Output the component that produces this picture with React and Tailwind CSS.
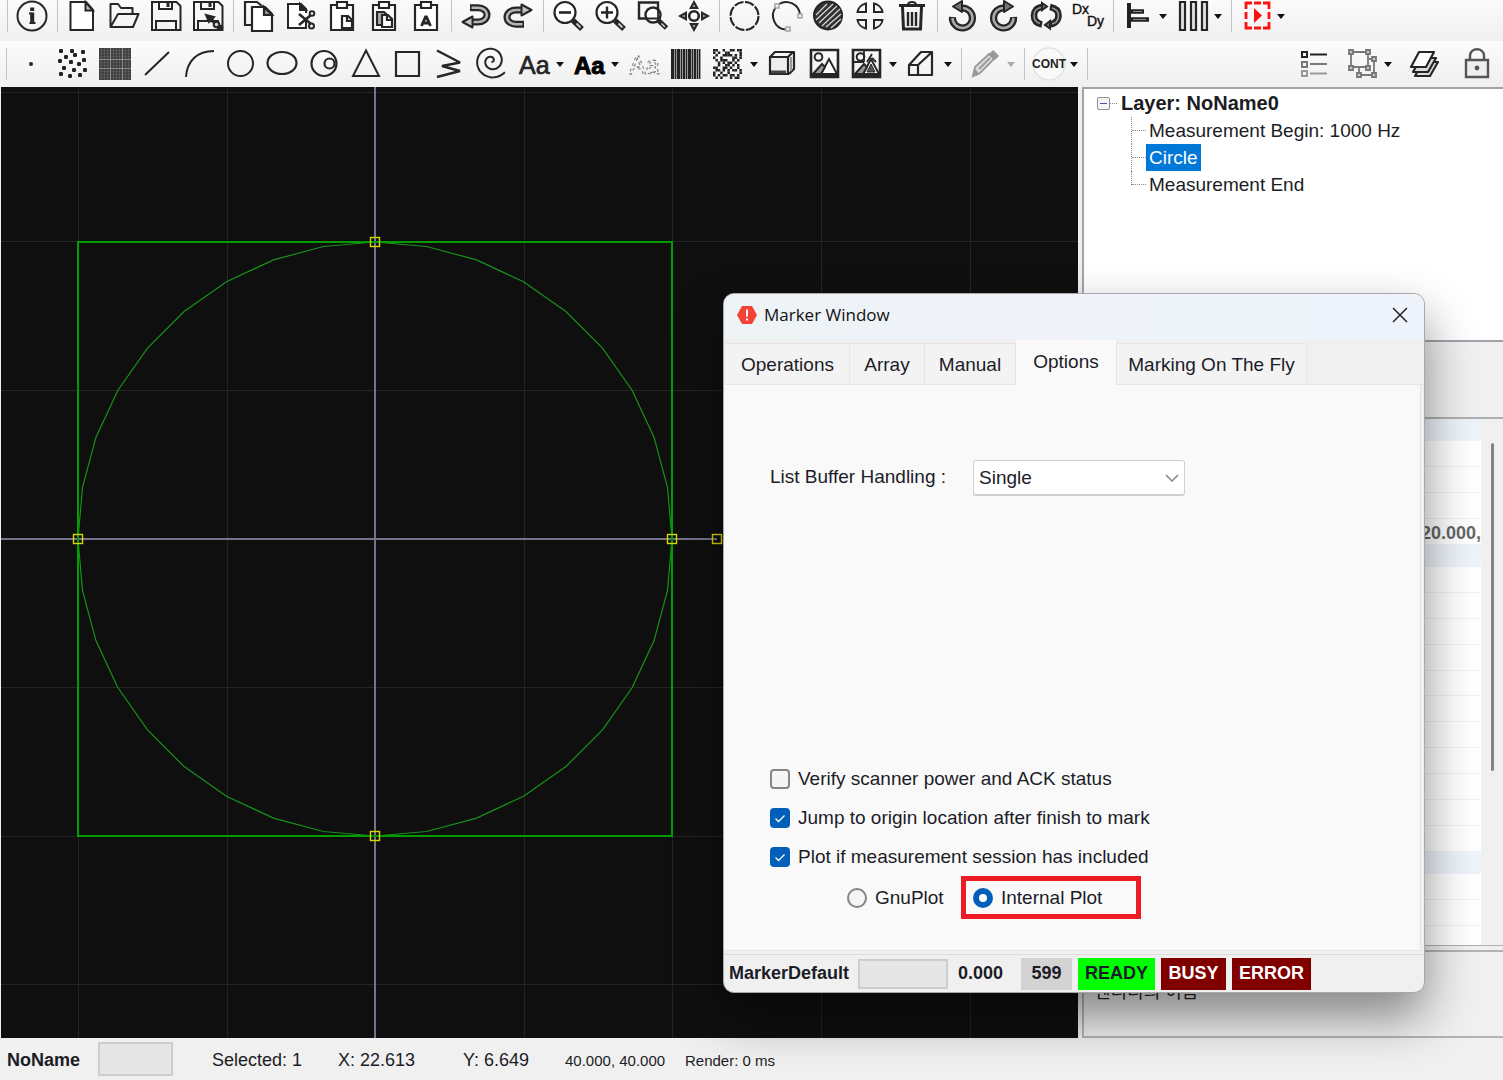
import React, { useState } from "react";

const INK = "#262626";

/* ---------- icon helpers: every icon is drawn on a 32 x 32 board ---------- */
function Svg({ children, w = 2, color = INK }) {
  return (
    <svg
      viewBox="0 0 32 32"
      className="h-8 w-8 shrink-0 overflow-visible"
      fill="none"
      stroke={color}
      strokeWidth={w}
      aria-hidden="true"
    >
      {children}
    </svg>
  );
}

const Info = () => (
  <Svg>
    <circle cx="16" cy="16" r="14.5" />
    <path d="M13 13.500h3.500M13.500 23h6" strokeWidth="1.800" />
    <path d="M16.200 12.600v11" strokeWidth="4" />
    <rect x="14.2" y="7.5" width="4" height="3.5" fill={INK} stroke="none" />
  </Svg>
);
const NewFile = () => (
  <Svg>
    <path d="M4.500 2H20l7 8v20H4.500z" fill="#fff" />
    <path d="M19.500 2v8.500H27z" fill="#bbb" />
  </Svg>
);
const Open = () => (
  <Svg>
    <path d="M2.500 27V4H10l3 4h11.500v5.500M2.500 27L10 14h20.500L25 27z" strokeLinejoin="round" />
  </Svg>
);
const SaveBody = () => (
  <>
    <path d="M2 2h24.500L30.500 6v24H2z" />
    <path d="M9 2v7h13V2M6 30v-9h20v9" />
    <path d="M18 3v4" strokeWidth="3" />
  </>
);
const Save = () => (
  <Svg>
    <SaveBody />
  </Svg>
);
const SaveAs = () => (
  <Svg>
    <SaveBody />
    <path d="M14 15l8 2-5 5z" fill={INK} />
    <path d="M18 19l7 5" strokeWidth="3.500" />
    <circle cx="24.500" cy="24.500" r="2.800" fill="#ccc" />
    <circle cx="28.500" cy="27.500" r="1.800" fill={INK} />
  </Svg>
);
const Copy = () => (
  <Svg w={2.2}>
    <path d="M10 25H3V2h12l5 4" />
    <path d="M10 7h13l7 7v17H10z" fill="#fff" />
    <path d="M22 7v8h8z" fill="#999" />
  </Svg>
);
const Cut = () => (
  <Svg>
    <path d="M20 28H4V4h13l5 5v4" fill="#fff" />
    <path d="M22 20v8h-4" />
    <path d="M16 4v6h6z" fill={INK} />
    <path d="M15 14l12 10M15 25l12-10" strokeWidth="2.600" />
    <circle cx="28" cy="13.500" r="2.300" />
    <circle cx="27.500" cy="26" r="2.500" />
  </Svg>
);
const Clipboard = ({ children }) => (
  <Svg w={2.2}>
    <path d="M5 5h22v25H5z" fill="#fff" />
    <path d="M11 2h10v6H11z" fill="#fff" />
    {children}
  </Svg>
);
const Paste = () => (
  <Clipboard>
    <path d="M16 16h6l4 4v8H16z" fill="#fff" />
    <path d="M21 16v5h5" />
  </Clipboard>
);
const PasteMulti = () => (
  <Clipboard>
    <path d="M9 12h7l3 3v10H9z" fill="#aaa" />
    <path d="M14 15h6l4 4v8H14z" fill="#fff" />
    <path d="M19 15v5h5" />
  </Clipboard>
);
const PasteText = () => (
  <Clipboard>
    <path d="M11.500 26l4-9h1l4 9M13 23h7" strokeWidth="2.800" />
  </Clipboard>
);
const UndoShape = () => (
  <>
    <path d="M10 7.800h8c5 0 9 3 9 7s-4 7.200-9 7.200h-8" strokeWidth="7" />
    <path d="M11.500 7.800H18c5 0 9 3 9 7s-4 7.200-9 7.200H9" strokeWidth="2.600" stroke="#b4b4b4" />
    <path d="M2.500 22l10-5.500v11z" fill="#c4c4c4" strokeLinejoin="round" />
  </>
);
const Undo = () => (
  <Svg>
    <UndoShape />
  </Svg>
);
const Redo = () => (
  <Svg>
    <g transform="rotate(180 16 16)">
      <UndoShape />
    </g>
  </Svg>
);
const ZoomBody = () => (
  <>
    <circle cx="13" cy="12.500" r="10.500" fill="#fff" />
    <path d="M21 20.500l9 8.500" strokeWidth="5.500" />
    <path d="M24.500 23.500l4 4" strokeWidth="1.800" stroke="#ccc" />
  </>
);
const ZoomOut = () => (
  <Svg w={2.2}>
    <ZoomBody />
    <path d="M7 12.500h12" strokeWidth="2.600" />
  </Svg>
);
const ZoomIn = () => (
  <Svg w={2.2}>
    <ZoomBody />
    <path d="M7 12.500h12M13 6.500v12" strokeWidth="2.400" />
  </Svg>
);
const ZoomFit = () => (
  <Svg w={2.4}>
    <path d="M3 2.500h19v16H3z" />
    <circle cx="17" cy="15" r="7.500" fill="#fff" />
    <path d="M22 10v8.500H10" strokeWidth="1.800" />
    <path d="M22.500 20.500l8 7.500" strokeWidth="5" />
    <path d="M25.500 23.500l3.500 3.500" strokeWidth="1.500" stroke="#ccc" />
  </Svg>
);
const Pan = () => (
  <Svg>
    <circle cx="16" cy="16" r="4.800" strokeWidth="2.600" />
    <g fill={INK} stroke="none">
      <path d="M16 0l5 9H11zM16 32l5-9H11zM0 16l9-5v10zM32 16l-9-5v10z" />
    </g>
    <g fill="#999" stroke="none">
      <path d="M16 4l1.500 3h-3zM16 28l1.500-3h-3zM4 16l3-1.500v3zM28 16l-3-1.500v3z" />
    </g>
  </Svg>
);
const DashCircle = () => (
  <Svg>
    <circle cx="16.500" cy="16" r="14" strokeDasharray="9.500 1.500" />
  </Svg>
);
const DashArc = () => (
  <Svg>
    <path d="M15 29.500A14 14 0 0 1 6 7" />
    <path d="M9 4A14 14 0 0 1 30 14" />
    <g stroke="#a5a5a5" strokeWidth="1.500" fill="#f2f2f2">
      <path d="M5 4h4v4H5zM28 14h4v4h-4zM16 27h4v4h-4z" />
    </g>
  </Svg>
);
const Hatch = () => (
  <Svg>
    <circle cx="16" cy="15.500" r="14" fill="#333" />
    <path
      d="M4 15L15 4M4 20L21 4M7 23L25 6M10 26L28 9M14 27L29 14M19 28L29 19"
      stroke="#ddd"
      strokeWidth="1.100"
    />
  </Svg>
);
const Quarters = () => (
  <Svg>
    <path
      d="M12 3.500V12H3.500C4 8 7.500 4.500 12 3.500zM20 3.500V12h8.500C28 8 24.500 4.500 20 3.500zM12 28.500V20H3.500c.5 4 4 7.500 8.500 8.500zM20 28.500V20h8.500c-.5 4-4 7.500-8.500 8.500z"
    />
  </Svg>
);
const Trash = () => (
  <Svg>
    <path d="M3 5.500h26" strokeWidth="3" />
    <path d="M12 5c0-4 8-4 8 0" />
    <path d="M6.500 7l1 22h17l1-22" strokeWidth="3" />
    <path d="M12 12v14M16 12v14M20 12v14" strokeWidth="2.400" />
  </Svg>
);
const TurnShape = () => (
  <>
    <path d="M6.500 17A10 10 0 1 0 16 8" strokeWidth="7.200" />
    <path d="M6.500 18A10 10 0 1 0 16 8" strokeWidth="2.600" stroke="#aaa" />
    <path d="M7 6.500l9-5.500v11z" fill="#777" strokeLinejoin="round" />
  </>
);
const RotL = () => (
  <Svg>
    <TurnShape />
  </Svg>
);
const RotR = () => (
  <Svg>
    <g transform="matrix(-1 0 0 1 32 0)">
      <TurnShape />
    </g>
  </Svg>
);
const Cycle = () => (
  <Svg>
    <path d="M12 7C7 7.500 4 11 4 15.500s2.500 8 8 9M20 24.500c5-.5 8.500-4.500 8.500-9S26 8 20 7" strokeWidth="6.600" />
    <path d="M11 7.500C7 8 4 11 4 15.500s2.500 7 6 8M22 24c4-1 6.500-4.500 6.500-8.500S26 9 22 8" strokeWidth="1.600" stroke="#999" />
    <path d="M12 3l5 3.500-5 3.500zM20 21l-5 4 5 3.500z" fill="#777" />
  </Svg>
);
const DxDy = () => (
  <Svg>
    <g fill="#111" stroke="#111" strokeWidth="0.400" fontFamily="Liberation Sans, sans-serif" fontSize="14">
      <text x="0" y="14">Dx</text>
      <text x="15" y="26">Dy</text>
    </g>
  </Svg>
);
const AlignLeft = () => (
  <Svg>
    <path d="M7 3v25" strokeWidth="4" stroke="#222" />
    <path d="M9 11.500h13M9 19.500h18" strokeWidth="4.500" stroke="#222" />
    <path d="M11 11.500h9M11 19.500h13" strokeWidth="1.200" stroke="#888" />
  </Svg>
);
const Columns = () => (
  <Svg w={2.200}>
    <path d="M3 2h5v28H3zM14 2h5v28h-5zM25 2h5v28h-5z" fill="#e4e4e4" />
  </Svg>
);
const Play = () => (
  <Svg color="#ff1010">
    <path d="M6 9V3h6M23 3h6v6M29 22v6h-6M12 28H6v-6M6 12v7M29 12v7M14 3h7M14 28h7" strokeWidth="2.800" />
    <path d="M14 8l8 7.500L14 23z" fill="#ff1010" stroke="none" />
  </Svg>
);

const Dot = () => (
  <Svg>
    <circle cx="16" cy="16" r="2" fill={INK} stroke="none" />
  </Svg>
);
const DOTS = [
  [4, 3], [15, 3], [26, 4], [18, 7], [9, 9], [27, 12], [3, 13], [14, 14], [22, 16],
  [7, 20], [17, 22], [28, 22], [4, 26], [13, 28], [23, 27],
];
const Dots = () => (
  <Svg>
    <g fill="#222" stroke="none">
      {DOTS.map(([x, y]) => (
        <rect key={`${x}-${y}`} x={x - 2} y={y - 2} width="4" height="4" rx="1.200" />
      ))}
    </g>
  </Svg>
);
const Mesh = () => (
  <Svg w={1}>
    <rect x="0" y="0" width="32" height="32" fill="#6a6a6a" stroke="none" />
    {[1, 4, 7, 10, 13, 16, 19, 22, 25, 28, 31].map((p) => (
      <path key={p} d={`M${p} 0v32M0 ${p}h32`} stroke="#383838" strokeWidth="1.200" />
    ))}
    <path d="M0 11.500h32M0 20.500h32M11.500 0v32M23.500 0v32" stroke="#8c8c8c" strokeWidth="1" />
  </Svg>
);
const Line = () => (
  <Svg>
    <path d="M4 27L28 4" />
  </Svg>
);
const Arc = () => (
  <Svg>
    <path d="M3 29C4 13 14 3 31 3" />
  </Svg>
);
const Circle = () => (
  <Svg>
    <circle cx="15.500" cy="15.500" r="12.500" />
  </Svg>
);
const Ellipse = () => (
  <Svg w={2.200}>
    <ellipse cx="15" cy="15" rx="14.500" ry="11" />
  </Svg>
);
const Trepan = () => (
  <Svg w={2.200}>
    <circle cx="15" cy="15.500" r="12.500" />
    <circle cx="20.500" cy="15.500" r="5" />
  </Svg>
);
const Triangle = () => (
  <Svg>
    <path d="M15 2.500L28 28H2z" />
  </Svg>
);
const Square = () => (
  <Svg w={2.200}>
    <path d="M3 4h23v24H3z" />
  </Svg>
);
const Zigzag = () => (
  <Svg w={2.400}>
    <path d="M2 2.500l23 12-18 3.500 18 5L2 29" strokeLinejoin="bevel" />
  </Svg>
);
const SPIRAL_POINTS = Array.from({ length: 76 }, (_, i) => {
  const deg = 40 + i * 10;
  const a = (deg * Math.PI) / 180;
  const r = 17.5 - ((deg - 40) / 90) * 2.05;
  return `${(14.5 + r * Math.cos(a)).toFixed(1)},${(13 + r * Math.sin(a)).toFixed(1)}`;
}).join(" ");
const Spiral = () => (
  <Svg>
    <polyline points={SPIRAL_POINTS} />
  </Svg>
);
const TextIcon = () => (
  <Svg>
    <text x="0" y="26" fontFamily="Liberation Sans, sans-serif" fontSize="25" fill={INK} stroke={INK} strokeWidth="0.700">Aa</text>
  </Svg>
);
const TextBold = () => (
  <Svg>
    <text x="0" y="26" fontFamily="Liberation Sans, sans-serif" fontSize="24" fontWeight="700" fill="#000" stroke="#000" strokeWidth="1">Aa</text>
  </Svg>
);
const TextDash = () => (
  <Svg>
    <text x="0" y="26" fontFamily="Liberation Sans, sans-serif" fontSize="25" fill="none" stroke="#555" strokeWidth="0.800" strokeDasharray="3 3">Aa</text>
  </Svg>
);
const BARS = [[1, 3], [5, 1], [7, 3], [11, 1], [13, 2], [16, 1], [18, 3], [22, 1], [24, 2], [27, 1], [29, 1]];
const Barcode = () => (
  <Svg>
    <rect x="0" y="1" width="30" height="30" fill="#999" stroke="none" />
    {BARS.map(([x, w]) => (
      <rect key={x} x={x - 1} y="1" width={w} height="30" fill="#222" stroke="none" />
    ))}
  </Svg>
);
const MATRIX = [
  "110010011011",
  "101001100001",
  "010011110101",
  "100100001101",
  "010111001010",
  "001010110100",
  "001001101010",
  "110011010010",
  "011010101101",
  "100100100001",
  "101011011010",
  "010100010110",
];
const Matrix = () => (
  <Svg>
    <g fill="#222" stroke="none">
      {MATRIX.map((row, y) =>
        row.split("").map((c, x) =>
          c === "1" ? (
            <rect key={`${x}-${y}`} x={x * 2.4} y={1 + y * 2.5} width="2.500" height="2.500" />
          ) : null
        )
      )}
    </g>
  </Svg>
);
const Box3d = () => (
  <Svg w={2.200}>
    <path d="M2 9h18v17H2z" fill="#eee" />
    <path d="M2 9l5-5h19v17l-5 5M20 9l5-5" strokeLinejoin="round" />
    <path d="M3 24h15" stroke="#444" strokeWidth="3" />
    <path d="M23 9v14" stroke="#999" />
  </Svg>
);
const ImageBody = () => (
  <>
    <path d="M1 2h27v27H1z" strokeWidth="2.600" />
    <circle cx="8.500" cy="9" r="3.800" />
    <path d="M11 26l8-15 8 15z" fill="#fff" />
    <path d="M3 26L12 16l3 3-4 7z" fill="#999" />
    <path d="M2 27h25" strokeWidth="3" />
  </>
);
const Image = () => (
  <Svg>
    <ImageBody />
  </Svg>
);
const ImageSplit = () => (
  <Svg>
    <ImageBody />
    <path d="M2 14h10M12 3v11M15 14l5-8M20 10l4 4" strokeWidth="1.800" />
    <path d="M15 24l4-8 4 8z" fill="#555" strokeWidth="1" />
  </Svg>
);
const Prism = () => (
  <Svg w={2.200}>
    <path d="M2 17h9v10H2zM2 17L14 4h11v23H11M11 17L25 4" strokeLinejoin="round" />
  </Svg>
);
const Pencil = () => (
  <Svg color="#999" w={1.800}>
    <path d="M3 28l2-9L19 6l5 5-14 14z" fill="#ddd" />
    <path d="M21 4l6 6" strokeWidth="6" />
    <path d="M9 21L20 10M3 28l5-2-3-4z" fill="#999" />
  </Svg>
);
const Cont = () => (
  <Svg color="#e2e2e2" w={1.500}>
    <circle cx="16" cy="16" r="16" fill="#f9f9f9" />
    <text x="16" y="20" textAnchor="middle" fontFamily="Liberation Sans, sans-serif" fontSize="12" fontWeight="700" fill="#222" stroke="none">CONT</text>
  </Svg>
);
const ListIcon = () => (
  <Svg>
    <path d="M3 4h5v5H3zM11 6.500h17" stroke="#222" />
    <path d="M3 14h5v5H3zM11 16h17" stroke="#777" />
    <path d="M3 23h5v5H3zM11 25.500h17" stroke="#999" />
  </Svg>
);
const Group = () => (
  <Svg color="#777" w={1.800}>
    <path d="M4 4h17v15H4zM22 11h5v16H12v-7" />
    <path d="M2 2h4v4H2zM19 2h4v4h-4zM2 18h4v4H2zM19 18h4v4h-4zM25 9h4v4h-4zM25 25h4v4h-4zM10 25h4v4h-4z" fill="#ccc" />
  </Svg>
);
const Layers = () => (
  <Svg w={2.200}>
    <path d="M7 28l8-14h15l-8 14z" fill="#ddd" strokeLinejoin="round" />
    <path d="M5 24l8-14h15l-8 14z" fill="#ddd" strokeLinejoin="round" />
    <path d="M3 19L11 4h15l-8 15z" fill="#fff" strokeLinejoin="round" />
  </Svg>
);
const Lock = () => (
  <Svg color="#555" w={2.400}>
    <path d="M5 12h22v17H5z" fill="#eee" />
    <path d="M9 12V8c0-9 14-9 14 0v4" />
    <circle cx="16" cy="20" r="2.400" fill="#555" stroke="none" />
  </Svg>
);

/* ---------- toolbar ---------- */
function Tool({ label, icon: Icon, menu, muted }) {
  return (
    <button type="button" aria-label={label} className="flex h-8 shrink-0 items-center">
      <span className="flex w-[42px] justify-center">
        <Icon />
      </span>
      {menu && (
        <span className="flex w-[13px]">
          <svg viewBox="0 0 8 5" className="h-[5px] w-2" aria-hidden="true">
            <path d="M0 0h8L4 5z" fill={muted ? "#aaaaaa" : "#111111"} />
          </svg>
        </span>
      )}
    </button>
  );
}

function Sep() {
  return (
    <span className="flex h-8 w-2 shrink-0 justify-center">
      <span className="w-px bg-[#c4c4c4]" />
    </span>
  );
}

const FILE_GROUPS = [
  [["About", Info]],
  [["New", NewFile], ["Open", Open], ["Save", Save], ["Save as", SaveAs]],
  [["Copy", Copy], ["Cut", Cut], ["Paste", Paste], ["Paste clone", PasteMulti], ["Paste array", PasteText]],
  [["Undo", Undo], ["Redo", Redo]],
  [["Zoom out", ZoomOut], ["Zoom in", ZoomIn], ["Zoom to fit", ZoomFit], ["Pan", Pan]],
  [["Explode", DashCircle], ["Divide", DashArc], ["Hatch", Hatch], ["Quarter", Quarters], ["Delete", Trash]],
  [["Rotate left", RotL], ["Rotate right", RotR], ["Rotate", Cycle], ["Translate", DxDy]],
  [["Align", AlignLeft, true], ["Distribute", Columns, true]],
  [["Simulate", Play, true]],
];

const DRAW_GROUPS = [
  [
    ["Point", Dot], ["Points", Dots], ["Raster", Mesh], ["Line", Line], ["Arc", Arc], ["Circle", Circle],
    ["Ellipse", Ellipse], ["Trepan", Trepan], ["Triangle", Triangle], ["Rectangle", Square],
    ["Polyline", Zigzag], ["Spiral", Spiral], ["Text", TextIcon, true], ["Bold text", TextBold, true],
    ["Outline text", TextDash], ["Barcode", Barcode], ["Data matrix", Matrix, true], ["Box", Box3d],
    ["Image", Image], ["Image grid", ImageSplit, true], ["Mesh", Prism, true],
  ],
  [["Pen", Pencil, true, true]],
  [["Continuous", Cont, true]],
];

function Groups({ groups }) {
  return groups.map((group, i) => (
    <React.Fragment key={i}>
      <Sep />
      {group.map(([label, icon, menu, muted]) => (
        <Tool key={label} label={label} icon={icon} menu={menu} muted={muted} />
      ))}
    </React.Fragment>
  ));
}

/* ---------- drawing canvas ---------- */
const CX = 374;
const CY = 452;
const R = 297;
const CIRCLE_POINTS = Array.from({ length: 36 }, (_, i) => {
  const a = (i * Math.PI) / 18;
  return `${CX + R * Math.sin(a)},${CY - R * Math.cos(a)}`;
}).join(" ");
const HANDLES = [[374, 155], [77, 452], [671, 452], [374, 749], [716, 452]];

function Canvas() {
  return (
    <svg className="h-full w-full" role="img" aria-label="Circle entity">
      <g stroke="#242424" strokeWidth="1" shapeRendering="crispEdges">
        {[77, 226, 523, 671, 820, 969].map((x) => (
          <line key={x} x1={x} x2={x} y1="0" y2="100%" />
        ))}
        {[5, 154, 303, 600, 749, 897].map((y) => (
          <line key={y} x1="0" x2="100%" y1={y} y2={y} />
        ))}
      </g>
      <g stroke="#77728a" strokeWidth="2" shapeRendering="crispEdges">
        <line x1={CX} x2={CX} y1="0" y2="100%" />
        <line x1="0" x2="716" y1={CY} y2={CY} />
      </g>
      <polygon points={CIRCLE_POINTS} fill="none" stroke="#17921a" strokeWidth="1.200" />
      <rect x={CX - R} y={CY - R} width={R * 2} height={R * 2} fill="none" stroke="#009c00" strokeWidth="2" shapeRendering="crispEdges" />
      {HANDLES.map(([x, y]) => (
        <rect key={`${x}-${y}`} x={x - 4.5} y={y - 4.5} width="9" height="9" fill="none" stroke="#d8d800" strokeWidth="1.400" />
      ))}
    </svg>
  );
}

/* ---------- right column ---------- */
function Branch() {
  return <span className="w-[14px] border-t border-dotted border-[#8a8a8a]" />;
}

function EntityTree() {
  return (
    <div className="h-[253px] border-t-2 border-l-2 border-[#a0a3ab] bg-white pl-[13px]">
      <ul className="text-[19px] leading-[27px] text-[#1c1c24]">
        <li className="pt-px">
          <div className="flex items-center">
            <button type="button" aria-label="Collapse" className="flex h-[13px] w-[13px] items-center justify-center rounded-[2px] border border-[#8f8f8f] bg-[#f4f4f4]">
              <span className="h-px w-[7px] bg-[#3c5aa0]" />
            </button>
            <span className="w-[7px] border-t border-dotted border-[#8a8a8a]" />
            <span className="pl-1 text-[20px] font-bold">Layer: NoName0</span>
          </div>
          <ul className="ml-[34px]">
            <li className="flex items-center border-l border-dotted border-[#8a8a8a]">
              <Branch />
              <span className="px-[3px]">Measurement Begin: 1000 Hz</span>
            </li>
            <li className="flex items-center border-l border-dotted border-[#8a8a8a]">
              <Branch />
              <span className="bg-[#0078d7] px-[3px] text-white">Circle</span>
            </li>
            <li className="flex items-center">
              <span className="h-[14px] self-start border-l border-dotted border-[#8a8a8a]" />
              <Branch />
              <span className="px-[3px]">Measurement End</span>
            </li>
          </ul>
        </li>
      </ul>
    </div>
  );
}

const ROWS = Array.from({ length: 21 }, (_, i) => ({
  category: i === 0 || i === 5 || i === 17,
  value: i === 4 ? "20.000," : "",
}));

function PropertyGrid() {
  return (
    <div className="flex min-h-0 flex-1 overflow-hidden border-t-2 border-b border-[#b0b0b0]">
      <div className="flex h-[533px] flex-1 flex-col bg-white">
        {ROWS.map((row, i) => (
          <div
            key={i}
            className={
              row.category
                ? "flex flex-1 items-center bg-[#eff4fb]"
                : "flex flex-1 items-center justify-end border-b border-[#edf1f8] pt-[3px] text-[18px] leading-5 font-bold text-[#666666]"
            }
          >
            {row.value}
          </div>
        ))}
      </div>
      <div className="flex w-[22px] justify-center bg-[#f0f0f0] pt-6">
        <div className="h-[328px] w-[3px] rounded bg-[#858585]" />
      </div>
    </div>
  );
}

/* ---------- dialog ---------- */
const TABS = [
  ["Operations", "w-[124px]"],
  ["Array", "w-[75px]"],
  ["Manual", "w-[91px]"],
  ["Options", "w-[101px]"],
  ["Marking On The Fly", "w-[190px]"],
];

function Check({ label, checked, onChange }) {
  return (
    <label className="flex h-[39px] items-center gap-2">
      <span className="grid">
        <input
          type="checkbox"
          checked={checked}
          onChange={onChange}
          className="col-start-1 row-start-1 h-5 w-5 appearance-none rounded border-2 border-[#858585] bg-[#f5f5f5] checked:border-[#005fb8] checked:bg-[#005fb8]"
        />
        {checked && (
          <svg viewBox="0 0 20 20" className="pointer-events-none col-start-1 row-start-1 h-5 w-5" fill="none" stroke="#fff" strokeWidth="1.300" aria-hidden="true">
            <path d="M5.500 10.500l3 3 6-6" />
          </svg>
        )}
      </span>
      <span className="pt-[2px]">{label}</span>
    </label>
  );
}

function Radio({ label, value, current, onChange }) {
  return (
    <label className="flex items-center gap-2">
      <input
        type="radio"
        name="plot"
        value={value}
        checked={current === value}
        onChange={() => onChange(value)}
        className="h-5 w-5 appearance-none rounded-full border-2 border-[#858585] bg-[#f5f5f5] checked:border-[6px] checked:border-[#005fb8] checked:bg-white"
      />
      <span className="pt-[2px]">{label}</span>
    </label>
  );
}

function MarkerWindow() {
  const [verify, setVerify] = useState(false);
  const [jump, setJump] = useState(true);
  const [plot, setPlot] = useState(true);
  const [plotter, setPlotter] = useState("internal");
  return (
    <section
      role="dialog"
      aria-label="Marker Window"
      className="absolute top-[293px] left-[723px] flex h-[700px] w-[702px] flex-col overflow-hidden rounded-[11px] border border-[#a8a8a8] bg-[#f0f0f0] text-[19px] text-[#1c1c28] shadow-[0_24px_50px_rgba(0,0,0,0.45)]"
    >
      <header className="flex h-[45px] shrink-0 items-center bg-linear-to-r from-[#eef3f6] to-[#eff3fc] pr-[14px] pb-[3px] pl-[13px]">
        <svg viewBox="0 0 20 20" className="h-5 w-5" aria-hidden="true">
          <path d="M5 1h10l5 9-5 9H5l-5-9z" fill="#f44336" />
          <path d="M10 4.500v7M10 13.500v2" stroke="#fff" strokeWidth="2" />
        </svg>
        <h2 className="flex-1 pl-[7px] font-['Open_Sans',sans-serif] text-[17px] text-[#111111]">Marker Window</h2>
        <button type="button" aria-label="Close" className="flex h-5 w-5 items-center justify-center">
          <svg viewBox="0 0 16 16" className="h-4 w-4" fill="none" stroke="#222" strokeWidth="1.500" aria-hidden="true">
            <path d="M1 1l14 14M15 1L1 15" />
          </svg>
        </button>
      </header>

      <div role="tablist" className="flex h-[46px] shrink-0 items-end pl-[2px]">
        {TABS.map(([name, width]) => (
          <button
            key={name}
            type="button"
            role="tab"
            aria-selected={name === "Options"}
            className={`${width} whitespace-nowrap border-r border-[#e6e6e6] ${
              name === "Options" ? "h-[45px] bg-[#f9f9f9]" : "h-[42px] border-t border-b bg-[#f3f3f3] pt-[2px]"
            }`}
          >
            {name}
          </button>
        ))}
        <span className="flex-1 self-stretch border-b border-[#e6e6e6]" />
      </div>

      <div role="tabpanel" className="mr-[3px] flex flex-1 flex-col justify-between border-r border-b border-[#e4e4e4] bg-[#f9f9f9] pt-[75px] pb-[31px] pl-[46px]">
        <div className="flex items-center">
          <label htmlFor="buffer" className="w-[203px] pb-[2px]">List Buffer Handling :</label>
          <div className="grid items-center">
            <select
              id="buffer"
              defaultValue="Single"
              className="col-start-1 row-start-1 h-9 w-[212px] appearance-none rounded-[3px] border border-b-2 border-[#d0d0d0] bg-white px-[5px] pt-[2px]"
            >
              <option>Single</option>
              <option>Auto</option>
            </select>
            <svg viewBox="0 0 14 8" className="pointer-events-none col-start-1 row-start-1 mr-[6px] h-2 w-[14px] justify-self-end" fill="none" stroke="#888" strokeWidth="1.600" aria-hidden="true">
              <path d="M1 1l6 6 6-6" />
            </svg>
          </div>
        </div>

        <div>
          <Check label="Verify scanner power and ACK status" checked={verify} onChange={() => setVerify(!verify)} />
          <Check label="Jump to origin location after finish to mark" checked={jump} onChange={() => setJump(!jump)} />
          <Check label="Plot if measurement session has included" checked={plot} onChange={() => setPlot(!plot)} />
          <div className="flex items-center pl-[77px]">
            <div className="w-[114px]">
              <Radio label="GnuPlot" value="gnu" current={plotter} onChange={setPlotter} />
            </div>
            <div className="flex h-[43px] w-[180px] items-center border-[5px] border-[#ed1c24] pl-[7px]">
              <Radio label="Internal Plot" value="internal" current={plotter} onChange={setPlotter} />
            </div>
          </div>
        </div>
      </div>

      <footer className="mt-[3px] flex h-[38px] shrink-0 items-center border-t border-[#dcdcdc] pl-[5px] text-[18px] font-bold">
        <span className="w-[129px]">MarkerDefault</span>
        <span className="h-[30px] w-[90px] border-2 border-[#cdcdcd] bg-[#e6e6e6]" />
        <span className="w-[73px] pl-[10px]">0.000</span>
        <span className="flex h-8 w-[51px] items-center justify-center bg-[#d3d3d3]">599</span>
        <span className="ml-[6px] flex h-8 w-[77px] items-center justify-center bg-[#00ff00]">READY</span>
        <span className="ml-[6px] flex h-8 w-[65px] items-center justify-center bg-[#800000] text-white">BUSY</span>
        <span className="ml-[6px] flex h-8 w-[79px] items-center justify-center bg-[#800000] text-white">ERROR</span>
      </footer>
    </section>
  );
}

export default function App() {
  return (
    <div className="relative flex h-screen flex-col overflow-hidden bg-[#f0f0f0] font-['Liberation_Sans','Noto_Sans_CJK_KR',sans-serif]">
      <div role="toolbar" aria-label="Edit" className="flex h-[41px] shrink-0 bg-linear-to-b from-[#fbfbfb] to-[#f0f0f0] pl-[3px]">
        <Groups groups={FILE_GROUPS} />
      </div>
      <div role="toolbar" aria-label="Draw" className="flex h-[46px] shrink-0 items-center bg-linear-to-b from-[#fcfcfc] to-[#efefef] pr-[5px] pl-[2px]">
        <Groups groups={DRAW_GROUPS} />
        <Sep />
        <div className="flex flex-1 justify-end gap-[6px]">
          <Tool label="Entity list" icon={ListIcon} />
          <Tool label="Group" icon={Group} menu />
          <Tool label="Layers" icon={Layers} />
          <span className="pl-[5px]">
            <Tool label="Lock" icon={Lock} />
          </span>
        </div>
      </div>

      <main className="flex min-h-0 flex-1 pl-px">
        <div className="min-w-0 flex-1 bg-[#0f0f0f]">
          <Canvas />
        </div>
        <aside className="flex w-[425px] shrink-0 flex-col pl-1">
          <EntityTree />
          <div className="h-[77px] shrink-0 border-t-2 border-[#a0a3ab]" />
          <PropertyGrid />
          <div className="mt-1 h-[88px] shrink-0 border-t-2 border-b-2 border-l-2 border-[#b4b4b4] pt-[28px] pl-[10px] text-[18px] leading-6 text-[#222222]">
            엔티티의 이름
          </div>
        </aside>
      </main>

      <footer className="flex h-[42px] shrink-0 items-center pl-[7px] text-[18px] whitespace-nowrap text-[#1c1c24]">
        <span className="w-[91px] pt-[2px] font-bold">NoName</span>
        <span className="mr-[39px] h-[34px] w-[75px] border-2 border-[#cdcdcd] bg-[#e6e6e6]" />
        <span className="w-[126px] pt-[2px]">Selected: 1</span>
        <span className="w-[125px] pt-[2px]">X: 22.613</span>
        <span className="w-[102px] pt-[2px]">Y: 6.649</span>
        <span className="w-[120px] pt-1 text-[15px]">40.000, 40.000</span>
        <span className="pt-1 text-[15px]">Render: 0 ms</span>
      </footer>

      <MarkerWindow />
    </div>
  );
}
